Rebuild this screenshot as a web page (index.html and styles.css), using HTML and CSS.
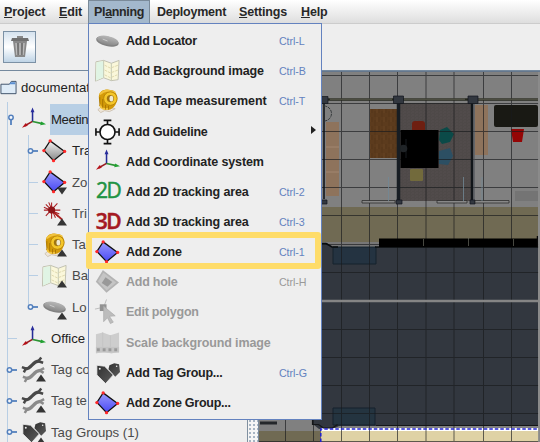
FILE: index.html
```
<!DOCTYPE html>
<html lang="en">
<head>
<meta charset="utf-8">
<title>Planning</title>
<link rel="stylesheet" href="styles.css">
</head>
<body>
<svg class="defs" width="0" height="0">
  <defs>
    <linearGradient id="blue" x1="0" y1="0" x2="0" y2="1"><stop offset="0" stop-color="#9a9afc"/><stop offset="1" stop-color="#4848f4"/></linearGradient>
    <linearGradient id="grey" x1="0" y1="0" x2="0" y2="1"><stop offset="0" stop-color="#f4f4f4"/><stop offset="1" stop-color="#888"/></linearGradient>
    <linearGradient id="disc" x1="0" y1="0" x2="0" y2="1"><stop offset="0" stop-color="#b8b8b8"/><stop offset="1" stop-color="#888"/></linearGradient>
    <linearGradient id="dark" x1="0" y1="0" x2="1" y2="1"><stop offset="0" stop-color="#303030"/><stop offset="1" stop-color="#5c5c5c"/></linearGradient>
    <symbol id="locator" viewBox="0 0 28 28"><ellipse cx="14" cy="14.4" rx="11.9" ry="5" transform="rotate(12 14 14)" fill="#818181"/><ellipse cx="14" cy="13.4" rx="11.2" ry="4.5" transform="rotate(12 14 14)" fill="url(#disc)"/><path d="M9 12l5 2" stroke="#ccc"/></symbol>
    <symbol id="map" viewBox="0 0 28 28"><path d="M2 4.500l8-1.500 8 3 8-3-1 20-7 1-8-3-8.500 3.500z" fill="#faf7da" stroke="#bfc0b0"/><path d="M2.500 5l7.500-1.500v17L2 24z" fill="#e0f4e4"/><path d="M10 3v18M18 6v18" stroke="#c4c8b4"/><path d="M11 8l6 3 8-3M11 13l6 3 8-3M11 18l6 3 7-3" fill="none" stroke="#ded7ad" stroke-dasharray="3 1"/></symbol>
    <symbol id="tape" viewBox="0 0 28 28"><path d="M4 23l5-4 9 2 4 1-6 3-5-1-4 2z" fill="#eee6d8" stroke="#b9a892" stroke-width=".6"/><path d="M5 9C6 4 9 2 14 2l6 1c4 3 5 7 3 13-2 6-8 9-13 6-4-2-5-8-5-13z" fill="#d49a08"/><path d="M6 7c5-5 10-4 16-2M6 18c1 4 5 5 9 4" fill="none" stroke="#f2c33d" stroke-width="2"/><path d="M6 10v9M9 12v9M12 18v5M15 19v4" stroke="#9e6c00" stroke-width=".8"/><circle cx="17" cy="11.500" r="7" fill="#f4c629" stroke="#b88408"/><circle cx="17" cy="11.500" r="3.700" fill="#9f7412"/><ellipse cx="18" cy="11.500" rx="2" ry="3" fill="#f1e9cf"/></symbol>
    <symbol id="guide" viewBox="0 0 28 28"><g fill="none" stroke="#111" stroke-width="1.700"><circle cx="14" cy="14" r="7.800" fill="#fff"/><path d="M14 2v4M10 2h8M14 22v4M10 26h8M2 14h4M2 10v8M22 14h4M26 10v8"/></g></symbol>
    <symbol id="axes" viewBox="0 0 28 28"><path d="M13 16V4" stroke="#242b96" stroke-width="1.600"/><path d="M13 1l-2 5h4z" fill="#282c9b"/><path d="M13 15.500L5 20" stroke="#991b21" stroke-width="1.600"/><path d="M2 22l4-5 2 3z" fill="#b51118"/><path d="M13 15.500l9 2" stroke="#2c9434" stroke-width="1.600"/><path d="M27 18.500l-6 1 1-4z" fill="#22a132"/></symbol>
    <symbol id="zone" viewBox="0 0 28 28"><path d="M9.500 3.500l15 11-11.500 9.500-10-10.500z" fill="url(#blue)" stroke="#111" stroke-width="1.300"/><g fill="#ff2828"><circle cx="9.500" cy="3.500" r="1.700"/><circle cx="24.500" cy="14.500" r="1.700"/><circle cx="13" cy="24" r="1.700"/><circle cx="3" cy="13.500" r="1.700"/></g></symbol>
    <symbol id="area" viewBox="0 0 28 28"><path d="M9.500 3.500l15 11-11.500 9.500-10-10.500z" fill="url(#grey)" stroke="#111" stroke-width="1.300"/><g fill="#ff2828"><circle cx="9.500" cy="3.500" r="1.700"/><circle cx="24.500" cy="14.500" r="1.700"/><circle cx="13" cy="24" r="1.700"/><circle cx="3" cy="13.500" r="1.700"/></g></symbol>
    <symbol id="hole" viewBox="0 0 28 28"><path d="M9.500 3l15 11.500-11.500 9.500-10-10.500z" fill="#c5c5c5" stroke="#b3b3b3" stroke-width="1.800"/><path d="M12 9l7 5-5 5-6-4z" fill="#999"/></symbol>
    <symbol id="edit" viewBox="0 0 28 28"><path d="M13 1l-3 8-9 2" fill="none" stroke="#bbb"/><path d="M6 6h7v7H6z" fill="#929292"/><path d="M10 8l12 10-6 .5 4 6-3 1.500-3-6-4 4z" fill="#bcbcbc" stroke="#a9a9a9" stroke-width=".7"/></symbol>
    <symbol id="scale" viewBox="0 0 28 28"><path d="M2 5l7-2 8 3 9-3v20l-8 2-8-2-8 2z" fill="#cdcdcd"/><path d="M9 3v15M17 6v12" stroke="#c4c4c4"/><path d="M2 18h24v6H2z" fill="#c4c4c4"/><path d="M3 19.500h3v3H3zm6 0h3v3H9zm6 0h3v3h-3zm6 0h3v3h-3z" fill="#999"/></symbol>
    <symbol id="tags" viewBox="0 0 28 28"><path d="M16 6l5-2 5 1 1 8-5 5-7-8z" fill="url(#dark)"/><path d="M3 6l8 1 9 9-8 9-9-9z" fill="url(#dark)" stroke="#efefef" stroke-width=".8"/><circle cx="6" cy="9.500" r="1" fill="#eee"/><circle cx="23.500" cy="7" r=".8" fill="#eee"/></symbol>
    <symbol id="rays" viewBox="0 0 28 28"><path d="M11 3v17M3 11h17M5 5l13 13M17 4L5 17M8 3l7 16M3 8l16 7" stroke="#aa1e22" stroke-width="1.100"/><path d="M11 11l11 10" stroke="#ad2020" stroke-width="1.800"/><circle cx="11" cy="11" r="3.700" fill="#8d1519"/></symbol>
    <symbol id="wrench" viewBox="0 0 28 28"><g fill="none" stroke-width="2.600"><path d="M6 23c8 0 7-8 15-8.500" stroke="#8b8b8b" stroke-width="3.400"/><path d="M3 21l4 1.500-2 4M25 12l-4.500 2.500 4 2.500" stroke="#8b8b8b"/><path d="M5 13c8 0 7-8 15-8.500" stroke="#484848" stroke-width="3.400"/><path d="M2 11l4 1.500-2 4M22 1l-3 4 5 1.500" stroke="#484848"/></g></symbol>
    <symbol id="up" viewBox="0 0 12 8"><path d="M1 7.500l5-7 5 7z" fill="#353535"/></symbol>
    <symbol id="down" viewBox="0 0 12 8"><path d="M1 .5h10l-5 7z" fill="#353535"/></symbol>
    <symbol id="knob" viewBox="0 0 12 12"><path d="M6 6h5" stroke="#5480bd" stroke-width="1.800"/><circle cx="3.500" cy="6" r="2.200" fill="#f4f7fb" stroke="#5480bd" stroke-width="1.500"/></symbol>
  </defs>
</svg>

<nav class="menubar">
  <span class="m-project"><u>P</u>roject</span><span class="m-edit"><u>E</u>dit</span><span class="m-planning">Pl<u>a</u>nning</span><span class="m-deploy">Deployment</span><span class="m-settings"><u>S</u>ettings</span><span class="m-help"><u>H</u>elp</span>
</nav>
<div class="toolbar">
  <button class="trash" aria-label="Delete"><svg width="20" height="24" viewBox="0 0 20 24"><path d="M3 6h14l-2 16H5z" fill="#888"/><path d="M2 3h16l1 3H1z" fill="#707070"/><path d="M7 1h6v2H7z" fill="#888"/><path d="M6 8l1 12M10 8v12M14 8l-1 12" stroke="#bcbcbc" stroke-width="1.500"/><path d="M8 8v12M12 8v12" stroke="#656565"/></svg></button>
</div>
<main class="workspace">
  <section class="tree">
    <div class="node root"><svg class="folder" viewBox="0 0 18 16"><path d="M1 4h9l2-3h5v13H1z" fill="#deebf7" stroke="#3c4f67"/><path d="M11 2h5v2h-6z" fill="#5b8fd2"/></svg><span>documentat</span></div>
    <div class="node top"><svg class="knob open"><use href="#knob"/></svg><svg class="icon"><use href="#axes"/></svg><span class="selected">Meetin</span></div>
    <div class="branch">
      <div class="node"><svg class="knob"><use href="#knob"/></svg><svg class="icon"><use href="#area"/></svg><span>Tra</span></div>
      <div class="node mute"><i class="twig"></i><svg class="icon"><use href="#zone"/></svg><svg class="badge"><use href="#down"/></svg><span>Zo</span></div>
      <div class="node mute"><i class="twig"></i><svg class="icon"><use href="#rays"/></svg><svg class="badge"><use href="#up"/></svg><span>Tri</span></div>
      <div class="node mute"><i class="twig"></i><svg class="icon"><use href="#tape"/></svg><svg class="badge"><use href="#up"/></svg><span>Ta</span></div>
      <div class="node mute"><i class="twig"></i><svg class="icon"><use href="#map"/></svg><svg class="badge"><use href="#up"/></svg><span>Ba</span></div>
      <div class="node mute"><svg class="knob"><use href="#knob"/></svg><svg class="icon"><use href="#locator"/></svg><svg class="badge"><use href="#up"/></svg><span>Lo</span></div>
    </div>
    <div class="node top"><i class="twig"></i><svg class="icon"><use href="#axes"/></svg><span>Office</span></div>
    <div class="node top mute"><svg class="knob"><use href="#knob"/></svg><svg class="icon"><use href="#wrench"/></svg><svg class="badge"><use href="#up"/></svg><span>Tag co</span></div>
    <div class="node top mute"><svg class="knob"><use href="#knob"/></svg><svg class="icon"><use href="#wrench"/></svg><svg class="badge"><use href="#up"/></svg><span>Tag te</span></div>
    <div class="node top mute"><svg class="knob"><use href="#knob"/></svg><svg class="icon"><use href="#tags"/></svg><svg class="badge"><use href="#up"/></svg><span>Tag Groups (1)</span></div>
  </section>
  <div class="splitter"></div>
  <svg class="plan" width="281" height="371" viewBox="259 71 281 371">
    <defs>
      <pattern id="wood" width="7" height="9" patternUnits="userSpaceOnUse"><path d="M0 0h7v9H0z" fill="#5c3b1d"/><path d="M1 0v5M4 3v6" stroke="#533419"/><path d="M6 0v5" stroke="#654223"/></pattern>
      <pattern id="carpet" width="4" height="3" patternUnits="userSpaceOnUse"><path d="M0 0h4v3H0z" fill="#4e4948"/><path d="M0 1h2M3 2h1" stroke="#565150" stroke-width=".6"/></pattern>
    </defs>
    <path d="M259 71h281v371H259" fill="#808080"/>
    <path d="M400 103h72v98h-72z" fill="url(#carpet)"/>
    <path d="M259 207h279v35H259z" fill="#706a53"/>
    <path d="M320 242h60v4h-60z" fill="#777"/>
    <path d="M320 243h7l5 4h206v179H339l-6 3h-14l-5-4h-2v-5z" fill="#32373f"/>
    <path d="M333 247h43v17h-43z" fill="#243341" stroke="#15222d"/>
    <path d="M333 408h42v17h-42z" fill="#243440" stroke="#14212c"/>
    <path d="M370 109h27v49h-27z" fill="url(#wood)"/>
    <path d="M326 122h13v74h-13zM475 105h13v50h-13z" fill="#8e735c"/><path d="M326 147h13M326 172h13" stroke="#a28770"/>
    <path d="M259 431h65v11h-65z" fill="#706a53"/>
    <path d="M260 423h17" stroke="#24272a" stroke-width="3"/>
    <path d="M321 428h218v14H321z" fill="#dfd2a5"/><path d="M321 429.500h218" stroke="#fff" stroke-width="3"/>
    <path d="M515 191h23v10h-23z" fill="#747474"/>
    <rect x="412" y="121" width="13" height="12" rx="3" fill="#6e1f11"/>
    <rect x="410" y="169" width="13" height="12" rx="1" fill="#726a3c"/>
    <path d="M440 130l7-3 7 7-4 8-8 2-3-4z" fill="#0b4a48"/>
    <path d="M439 151l11-3 3 8-5 9-9-1z" fill="#2c4f63"/>
    <rect x="494" y="105" width="44" height="22" rx="2" fill="#191914"/>
    <path d="M511 129h13l-2 13h-9z" fill="#940505"/>
    <g stroke="#181a1d" stroke-width="1" opacity=".65">
      <path d="M285.500 71v371M313.500 71v371M341.500 71v371M369.500 71v371M397.500 71v371M426 71v371M454 71v371M483.500 71v371M511.500 71v371"/>
      <path d="M259 75.500h280M259 103.500h280M259 131.500h280M259 159.500h280M259 187.500h280M259 215.500h280M259 244.500h280M259 272.500h280M259 301h280M259 329.500h280M259 357.500h280M259 385.500h280M259 413.500h280M259 441.500h280"/>
    </g>
    <path d="M400.500 130h38v38h-38z" fill="#000"/><path d="M406 139v19" stroke="#171b1e"/><circle cx="403.500" cy="148.500" r="3.800" fill="#202427"/>
    <path d="M320 99.500h218" stroke="#26291f" stroke-width="2.400"/><path d="M330 99.200h62M404 99.200h61M478 99.200h60" stroke="#777565" stroke-width=".7"/>
    <path d="M324 101v98" stroke="#0b0f14" stroke-width="1.500"/><path d="M398.500 103v99" stroke="#171d23" stroke-width="3.500"/><path d="M472 103v99" stroke="#111519" stroke-width="2.400"/><path d="M474 104v97" stroke="#464b52"/>
    <path d="M320 96.500h8v7h-8zM393.500 96h10v7.500h-10zM468 96h10v7.500h-10zM321 200h6v4h-6zM396 200h6v4h-6zM470 200h5v4h-5z" fill="#32373f" stroke="#11161c" stroke-width=".7"/>
    <path d="M324 106a7.500 7.500 0 0 1 0 15" fill="none" stroke="#34383a" stroke-dasharray="3 1"/>
    <path d="M362 200.500h33v2.500h-33zM437 200.500h30v2.500h-30zM475 200.500h34v2.500h-34z" fill="#888" stroke="#222" stroke-width=".7"/>
    <path d="M388.500 177v24M463.500 177v24M482 177v24" stroke="#718895" stroke-width=".8"/>
    <path d="M320 243.500h6l6 3.500h6M375 247h164" fill="none" stroke="#090c0e" stroke-width="1.500"/>
    <path d="M379 238.500h158v8.500H379z" fill="#000"/><path d="M423.500 239v7M468.500 238v8M513.500 239v7" stroke="#77786d" stroke-width=".6"/><path d="M537.500 236v11" stroke="#090909" stroke-width="1.500"/>
    <path d="M320 301h218" stroke="#858585" stroke-width="2.400"/>
    <path d="M312.500 419v5.500h6l5 3.500h9l5-3.500M376 425.500h162" fill="none" stroke="#141618" stroke-width="1.200"/>
    <path d="M320.800 442v-13h218" fill="none" stroke="#2020d4" stroke-width="1.500" stroke-dasharray="3.500 2"/>
    <path d="M539 71v371" stroke="#8c8c8c" stroke-width="1.800"/>
    <path d="M259 71.500h281" stroke="#65778c"/>
  </svg>
</main>

<div class="popup">
  <div class="item tight"><svg class="icon"><use href="#locator"/></svg><span>Add Locator</span><kbd>Ctrl-L</kbd></div>
  <div class="item"><svg class="icon"><use href="#map"/></svg><span>Add Background image</span><kbd>Ctrl-B</kbd></div>
  <div class="item wide"><svg class="icon"><use href="#tape"/></svg><span>Add Tape measurement</span><kbd>Ctrl-T</kbd></div>
  <div class="item tight"><svg class="icon"><use href="#guide"/></svg><span>Add Guideline</span><b class="arrow"></b></div>
  <div class="item"><svg class="icon"><use href="#axes"/></svg><span>Add Coordinate system</span></div>
  <div class="item"><strong class="dim green">2D</strong><span>Add 2D tracking area</span><kbd>Ctrl-2</kbd></div>
  <div class="item"><strong class="dim red">3D</strong><span>Add 3D tracking area</span><kbd>Ctrl-3</kbd></div>
  <div class="item tight highlight"><svg class="icon"><use href="#zone"/></svg><span>Add Zone</span><kbd>Ctrl-1</kbd></div>
  <div class="item tight off"><svg class="icon"><use href="#hole"/></svg><span>Add hole</span><kbd>Ctrl-H</kbd></div>
  <div class="item tight off"><svg class="icon"><use href="#edit"/></svg><span>Edit polygon</span></div>
  <div class="item off"><svg class="icon"><use href="#scale"/></svg><span>Scale background image</span></div>
  <div class="item tight"><svg class="icon"><use href="#tags"/></svg><span>Add Tag Group...</span><kbd>Ctrl-G</kbd></div>
  <div class="item tight"><svg class="icon"><use href="#zone"/></svg><span>Add Zone Group...</span></div>
</div>
</body>
</html>
```
FILE: styles.css
```
*, *::after { box-sizing: border-box; }
html, body { width: 540px; height: 442px; overflow: hidden; }
body { margin: 0; position: relative; display: flex; flex-direction: column; background: #eee; color: #282828; font: 13px "Liberation Sans", Arial, sans-serif; }
.defs { position: absolute; }
u { text-underline-offset: 1px; text-decoration-thickness: 1px; }
.menubar { height: 24px; flex: none; display: flex; align-items: center; padding-left: 4px; background: linear-gradient(#fff, #dedede); border-bottom: 1px solid #ccc; font-size: 12.5px; font-weight: bold; letter-spacing: -.15px; white-space: nowrap; }
.menubar span { line-height: 24px; }
.m-project { width: 55px; }
.m-edit { width: 29px; }
.menubar .m-planning { width: 62px; height: 23px; line-height: 22px; padding-left: 5px; letter-spacing: -.35px; background: #a3b8cc; border: 1px solid #7a8a99; border-width: 1px 1px 0; align-self: flex-end; }
.m-deploy { width: 89px; padding-left: 7px; letter-spacing: -.25px; }
.m-settings { width: 62px; }
.m-help { width: 40px; }
.toolbar { height: 47px; flex: none; padding: 7px 3px; background: #eee; border-bottom: 1px solid #75899e; }
.trash { width: 33px; height: 32px; padding: 0; display: grid; place-items: center; border: 1px solid #7c91a5; background: linear-gradient(#d5e2ee, #fff 50%, #bfd4e6); }
.workspace { flex: 1; display: flex; min-height: 0; }
.tree { width: 248px; overflow: hidden; position: relative; padding-top: 1px; background: linear-gradient(#b8cee4, #b8cee4) 7px 31px / 1px 340px no-repeat #eee; border-right: 1px solid #8090a0; }
.splitter { width: 11px; flex: none; border-right: 1px solid #78889a; background: radial-gradient(circle, #a5b3c2 .7px, transparent 1px) 0 0 / 4px 4px #f5f5f5; }
.plan { flex: none; width: 281px; height: 371px; }
.node { height: 31.25px; display: flex; align-items: center; white-space: nowrap; position: relative; color: #222; font-size: 13.2px; }
.node.root { height: 32px; padding-bottom: 1px; gap: 4px; }
.folder { width: 17px; height: 16px; flex: none; }
.top { padding-left: 6px; }
.knob { width: 12px; height: 12px; flex: none; margin-right: 2px; }
.open { transform: rotate(90deg); margin-left: -1px; margin-right: 3px; }
.icon { width: 27px; height: 28px; flex: none; }
.node .icon { margin-right: 4px; }
.twig { width: 10px; height: 1px; margin-left: 1px; margin-right: 3px; background: #b8cee4; }
.branch { padding-left: 27px; background: linear-gradient(#b8cee4, #b8cee4) 28px 0 / 1px 172px no-repeat; }
.badge { position: absolute; width: 12px; height: 8px; left: 29px; top: 20px; }
.node.top .badge { left: 35px; }
.mute { color: #4a4a4a; }
.selected { width: 39px; height: 31px; line-height: 31px; margin-left: -1px; padding-left: 1px; letter-spacing: -.4px; background: #b8cfe5; }
.popup { position: absolute; left: 88px; top: 23px; width: 234px; height: 397px; padding-top: 2px; border: 1px solid #6382bf; background: #eee; }
.item { height: 30.17px; padding-left: 5px; padding-right: 14px; display: flex; align-items: center; color: #222; font-size: 12.5px; font-weight: bold; letter-spacing: -.12px; position: relative; white-space: nowrap; }
.item.tight { letter-spacing: -.25px; }
.item.wide { letter-spacing: 0; }
.item > span { margin-left: 5px; }
.item kbd { margin-left: auto; width: 28px; color: #6382bf; letter-spacing: -.1px; font: 10.7px "Liberation Sans", Arial, sans-serif; }
.item.off, .item.off kbd { color: #999; }
.highlight::after { content: ""; position: absolute; left: -3px; right: 0; top: -5px; height: 37px; border: 6px solid #fedc69; border-radius: 3px; }
.item .dim { width: 27px; padding-left: 1px; text-align: center; line-height: 26px; margin-top: -3px; font: 21px/26px "Open Sans", sans-serif; -webkit-text-stroke: .5px; letter-spacing: -1.5px; }
.green { color: #209343; }
.item .red { color: #a51922; font-weight: 600; }
.arrow { position: absolute; left: 222px; top: 10px; border: 4.5px solid transparent; border-left: 5px solid #222; border-right: 0; }
```
